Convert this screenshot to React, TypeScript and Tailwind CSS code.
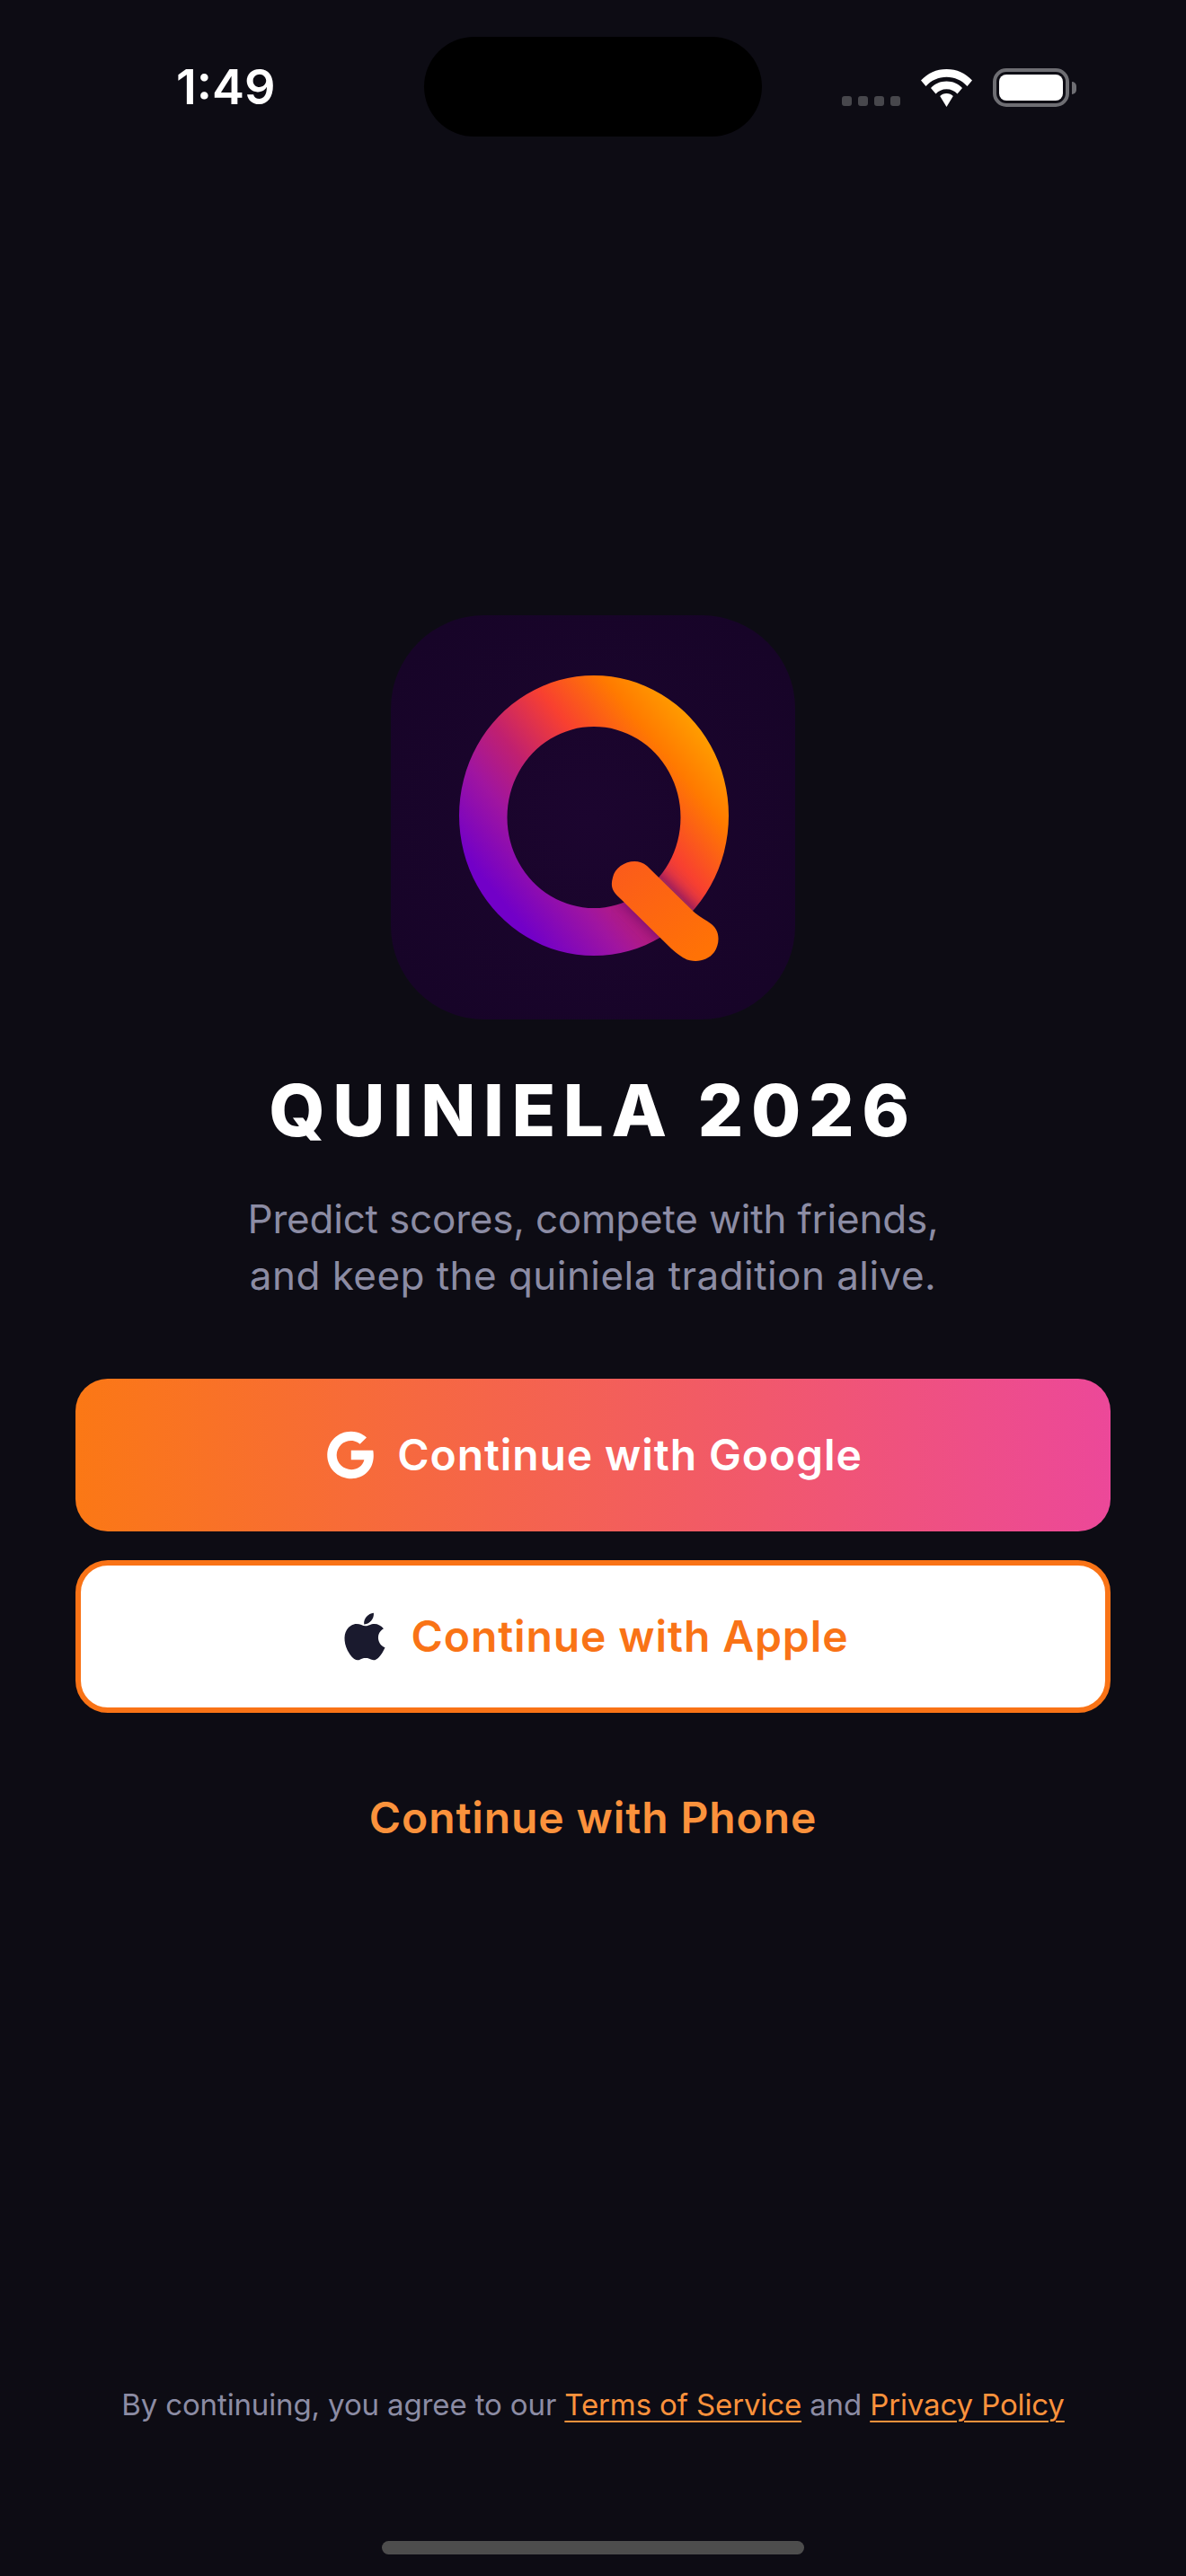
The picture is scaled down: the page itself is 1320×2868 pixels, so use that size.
import { IoLogoApple, IoLogoGoogle } from "react-icons/io5";

const font = "font-['Inter',sans-serif]";

const QLogo = () => (
  <svg viewBox="0 0 450 450" className="w-[450px] h-[450px] block">
    <defs>
      <radialGradient id="tile" cx="50%" cy="50%" r="60%">
        <stop offset="0%" stopColor="#1c052f" />
        <stop offset="100%" stopColor="#170428" />
      </radialGradient>
      <linearGradient id="ring" gradientUnits="userSpaceOnUse" x1="102" y1="292" x2="328" y2="108">
        <stop offset="0%" stopColor="#7200c8" />
        <stop offset="23%" stopColor="#a015a0" />
        <stop offset="40%" stopColor="#c02070" />
        <stop offset="62%" stopColor="#f84030" />
        <stop offset="84%" stopColor="#ff7a00" />
        <stop offset="100%" stopColor="#ff9c00" />
      </linearGradient>
      <linearGradient id="tail" gradientUnits="userSpaceOnUse" x1="250" y1="270" x2="340" y2="380">
        <stop offset="0%" stopColor="#fb5a1c" />
        <stop offset="100%" stopColor="#ff7206" />
      </linearGradient>
      <filter id="blur" x="-30%" y="-30%" width="160%" height="160%">
        <feGaussianBlur stdDeviation="9" />
      </filter>
      <clipPath id="ringClip">
        <path
          clipRule="evenodd"
          d="M226 67a150 156 0 1 0 0.01 0ZM226 124a96.5 101 0 1 1 -0.01 0Z"
        />
      </clipPath>
    </defs>
    <rect width="450" height="450" rx="104" fill="url(#tile)" />
    <path
      fillRule="evenodd"
      fill="url(#ring)"
      d="M226 67a150 156 0 1 0 0.01 0ZM226 124a96.5 101 0 1 1 -0.01 0Z"
    />
    <g clipPath="url(#ringClip)">
      <line x1="268" y1="294" x2="342" y2="366" stroke="#4a0a70" strokeOpacity="0.75" strokeWidth="50" filter="url(#blur)" />
    </g>
    <path
      fill="url(#tail)"
      d="M285 279L337 330C343 336 351 339 357 344C367 352 366 366 360 375C351 387 333 388 322 379C318 376 315 374 312 371L256 316C247 308 244 303 247 292C250 277 272 268 285 279Z"
    />
  </svg>
);

const WifiIcon = () => (
  <svg viewBox="0 0 57 42" className="w-[57px] h-[42px] block" fill="#fff">
    <path d="M28.500 0C40 0 49.500 4.500 57 12.500L51.500 19C45.500 12.500 37.500 8.800 28.500 8.800C19.500 8.800 11.500 12.500 5.500 19L0 12.500C7.500 4.500 17 0 28.500 0Z" />
    <path d="M28.500 13.500C35.500 13.500 41.500 16.200 46 21L40.500 27.500C37.500 24.300 33.300 22.300 28.500 22.300C23.700 22.300 19.500 24.300 16.500 27.500L11 21C15.500 16.200 21.500 13.500 28.500 13.500Z" />
    <path d="M28.500 27C31.500 27 34 28.100 35.800 30L28.500 42L21.200 30C23 28.100 25.500 27 28.500 27Z" />
  </svg>
);

const Battery = () => (
  <div className="flex items-center">
    <div className="w-[85px] h-[43px] rounded-[15px] border-[4px] border-[#6e6e73] p-[3px]">
      <div className="w-full h-full rounded-[8px] bg-white" />
    </div>
    <div className="w-[5px] h-[14px] ml-[3px] rounded-r-[5px] bg-[#6e6e73]" />
  </div>
);

export default function App() {
  return (
    <div className={`w-[1320px] h-[2868px] flex flex-col items-center bg-[#0d0c14] overflow-hidden ${font}`}>
      {/* status bar */}
      <div className="w-full h-[111px] mt-[41px] flex items-center shrink-0">
        <div className="w-[472px] pl-[196px]">
          <span className="text-[54px] leading-[54px] font-semibold text-white">1:49</span>
        </div>
        <div className="w-[376px] h-[111px] rounded-[56px] bg-black" />
        <div className="w-[472px] flex justify-end items-end gap-[23px] pr-[122px] pt-[2px]">
          <div className="flex gap-[7px] mb-[1px]">
            <span className="w-[11px] h-[11px] rounded-[3px] bg-[#47474c]" />
            <span className="w-[11px] h-[11px] rounded-[3px] bg-[#47474c]" />
            <span className="w-[11px] h-[11px] rounded-[3px] bg-[#47474c]" />
            <span className="w-[11px] h-[11px] rounded-[3px] bg-[#47474c]" />
          </div>
          <WifiIcon />
          <Battery />
        </div>
      </div>

      {/* logo and tagline */}
      <div className="mt-[533px] shrink-0">
        <QLogo />
      </div>
      <h1 className="mt-[53px] text-[80px] leading-[96px] font-extrabold tracking-[8.5px] text-white whitespace-nowrap">
        QUINIELA 2026
      </h1>
      <p className="mt-[42px] text-[44px] leading-[63px] font-normal text-center text-[#8c8ca4]">
        <span className="tracking-[-0.2px]">Predict scores, compete with friends,</span>
        <br />
        <span className="tracking-[0.45px]">and keep the quiniela tradition alive.</span>
      </p>

      {/* sign in buttons */}
      <div className="w-[1152px] mt-[83px] flex flex-col gap-[32px]">
        <button className="h-[170px] rounded-[36px] flex items-center justify-center gap-[22px] bg-linear-to-r/srgb from-[#fb7815] to-[#ec4899] text-white text-[48px] tracking-[0.9px] font-semibold">
          <IoLogoGoogle className="w-[60px] h-[60px]" />
          Continue with Google
        </button>
        <button className="h-[170px] rounded-[36px] flex items-center justify-center gap-[22px] border-[6px] border-[#f97316] bg-white text-[#f97316] text-[48px] tracking-[0.9px] font-semibold">
          <IoLogoApple className="w-[60px] h-[60px] text-[#1a1a2e]" />
          Continue with Apple
        </button>
        <button className="h-[170px] flex items-center justify-center text-[#fb923c] text-[48px] tracking-[0.9px] font-semibold">
          Continue with Phone
        </button>
      </div>

      {/* legal and home indicator */}
      <p className="mt-auto text-[33px] leading-[48px] tracking-[-0.13px] font-normal text-[#8c8ca4] whitespace-nowrap">
        By continuing, you agree to our <span className="text-[#fb923c] underline underline-offset-[6px] decoration-2">Terms of Service</span> and <span className="text-[#fb923c] underline underline-offset-[6px] decoration-2">Privacy Policy</span>
      </p>
      <div className="w-[470px] h-[15px] mt-[128px] mb-[24px] rounded-[8px] bg-[#4d4d4d] shrink-0" />
    </div>
  );
}
